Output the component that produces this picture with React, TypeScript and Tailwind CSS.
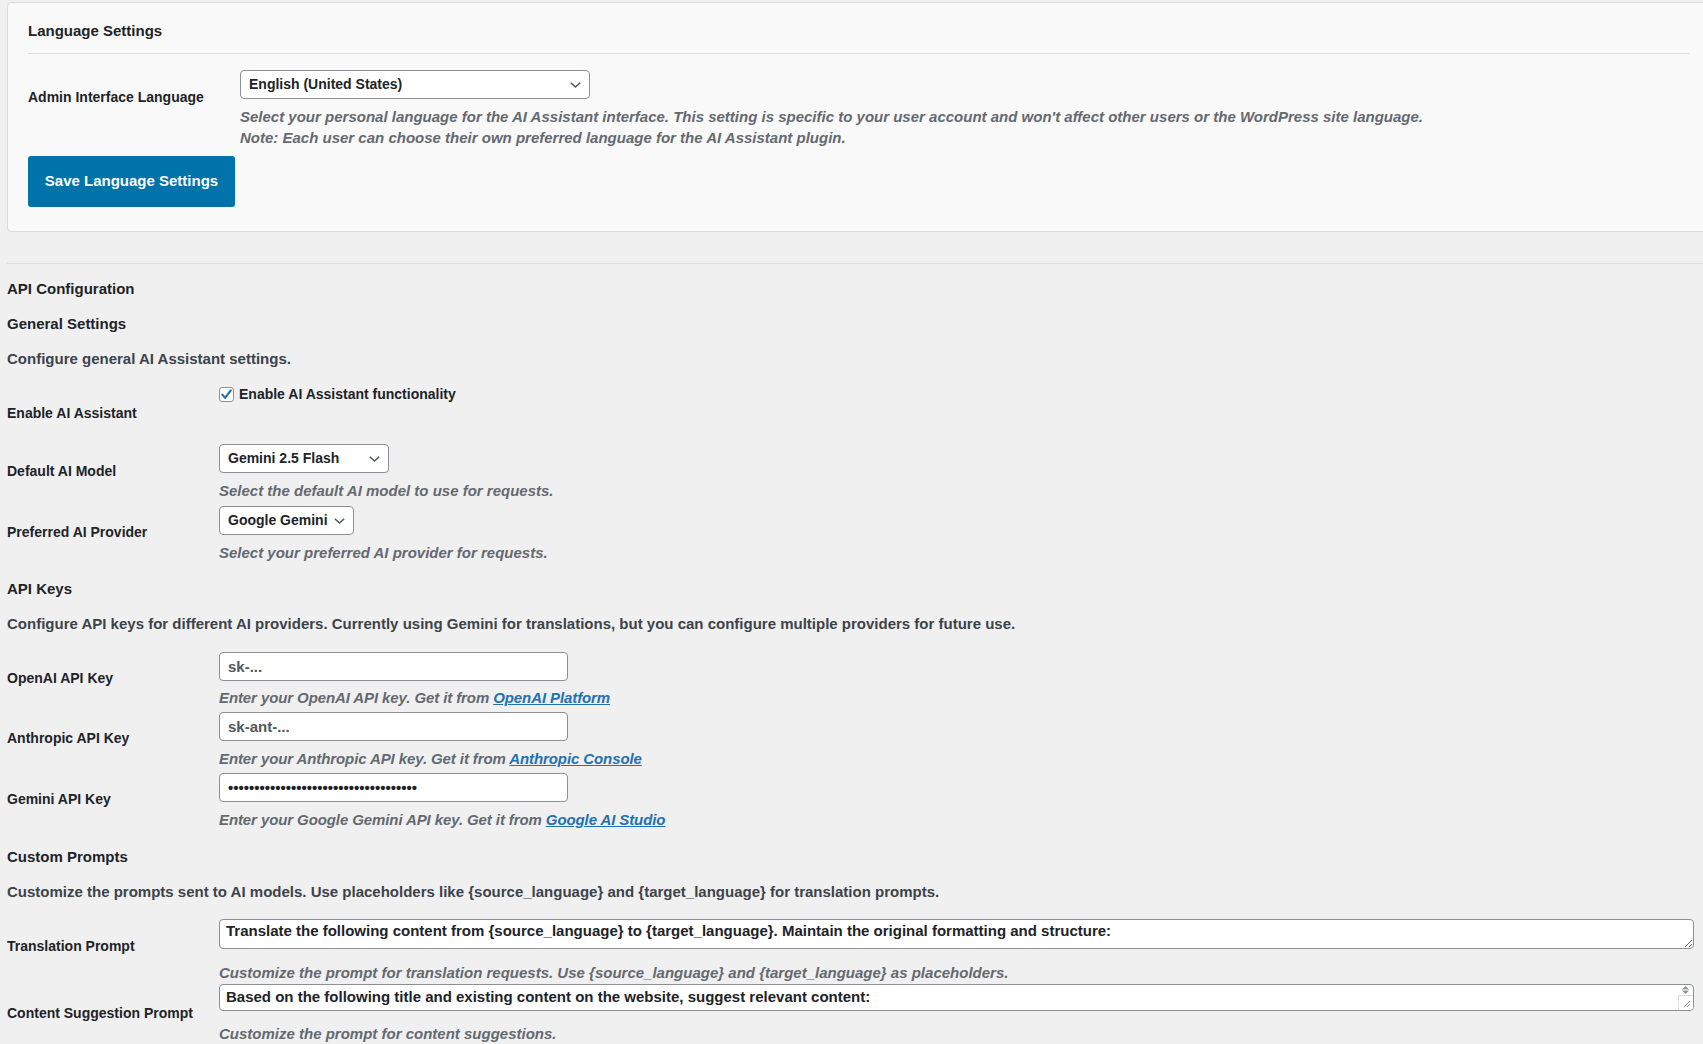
import React from "react";

const Chevron = () => (
  <svg width="11" height="6" viewBox="0 0 11 6" fill="none" className="shrink-0">
    <path d="M0.8 0.8L5.5 5L10.2 0.8" stroke="#50575e" strokeWidth="1.5" />
  </svg>
);

const SelectBox = ({ value, className = "" }: { value: string; className?: string }) => (
  <div
    className={`flex h-[29px] items-center justify-between gap-[6px] rounded-[4px] border border-[#8c8f94] bg-white pl-[8px] pr-[8px] text-[14px] font-bold text-[#1d2327] ${className}`}
  >
    <span>{value}</span>
    <Chevron />
  </div>
);

const Desc = ({ children, className = "" }: { children: React.ReactNode; className?: string }) => (
  <p className={`text-[15px] font-bold italic leading-[20px] text-[#646970] ${className}`}>{children}</p>
);

const Heading = ({ children, className = "" }: { children: React.ReactNode; className?: string }) => (
  <h3 className={`text-[15px] font-bold leading-[20px] text-[#1d2327] ${className}`}>{children}</h3>
);

const Row = ({
  label,
  labelClass,
  className = "",
  children,
}: {
  label: string;
  labelClass: string;
  className?: string;
  children: React.ReactNode;
}) => (
  <div className={`flex ${className}`}>
    <div className={`w-[212px] shrink-0 text-[14px] font-bold leading-[20px] text-[#1d2327] ${labelClass}`}>{label}</div>
    <div className="min-w-0 flex-1">{children}</div>
  </div>
);

const TextInput = ({ value, placeholder }: { value?: string; placeholder?: string }) => (
  <input
    readOnly
    value={value ?? ""}
    placeholder={placeholder}
    className="block h-[29px] w-[349px] rounded-[4px] border border-[#8c8f94] bg-white px-[8px] text-[15px] font-bold text-[#1d2327] outline-none placeholder:text-[#50575e]"
  />
);

const Link = ({ children }: { children: React.ReactNode }) => (
  <a href="#" className="text-[#2271b1] underline">
    {children}
  </a>
);

export default function App() {
  return (
    <div className="min-h-screen w-full overflow-hidden bg-[#f0f0f1] font-['Liberation_Sans',Arial,sans-serif] text-[#1d2327]">
      <div className="w-[1730px] pl-[7px] pt-[2px]">
        {/* Language settings card */}
        <div className="rounded-[4px] border border-[#dcdcde] bg-[#f9f9f9] pb-[24px] pl-[20px] pr-[40px] pt-[18px]">
          <Heading>Language Settings</Heading>
          <div className="mt-[12px] h-px bg-[#dcdcde]" />

          <Row label="Admin Interface Language" labelClass="pt-[17px]" className="mt-[16px]">
            <SelectBox value="English (United States)" className="w-[350px]" />
            <div className="mt-[7px] text-[15px] font-bold italic leading-[21px] text-[#646970]">
              <p>
                Select your personal language for the AI Assistant interface. This setting is specific to your user
                account and won't affect other users or the WordPress site language.
              </p>
              <p>Note: Each user can choose their own preferred language for the AI Assistant plugin.</p>
            </div>
          </Row>

          <button className="mt-[8px] h-[51px] w-[207px] rounded-[3px] bg-[#0073aa] pb-px text-[15px] font-bold text-white">
            Save Language Settings
          </button>
        </div>

        <div className="mt-[31px] h-px bg-[#dcdcde]" />

        {/* API configuration */}
        <Heading className="mt-[15px]">API Configuration</Heading>
        <Heading className="mt-[15px]">General Settings</Heading>
        <p className="mt-[15px] text-[15px] font-bold leading-[20px] text-[#3c434a]">
          Configure general AI Assistant settings.
        </p>

        <Row label="Enable AI Assistant" labelClass="pt-[19px]" className="mt-[15px] h-[60px]">
          <label className="flex items-center gap-[5px] text-[14px] font-bold leading-[20px] text-[#1d2327]">
            <span className="flex h-[15px] w-[15px] items-center justify-center rounded-[3px] border border-[#8c8f94] bg-white">
              <svg width="13" height="13" viewBox="0 0 13 13" fill="none">
                <path d="M2.3 6.6L5.1 9.8L10.8 2.4" stroke="#2271b1" strokeWidth="2.2" strokeLinecap="round" strokeLinejoin="round" />
              </svg>
            </span>
            Enable AI Assistant functionality
          </label>
        </Row>

        <Row label="Default AI Model" labelClass="pt-[17px]">
          <SelectBox value="Gemini 2.5 Flash" className="w-[170px]" />
          <Desc className="mt-[8px]">Select the default AI model to use for requests.</Desc>
        </Row>

        <Row label="Preferred AI Provider" labelClass="pt-[16px]" className="mt-[5px]">
          <SelectBox value="Google Gemini" className="w-fit" />
          <Desc className="mt-[8px]">Select your preferred AI provider for requests.</Desc>
        </Row>

        <Heading className="mt-[16px]">API Keys</Heading>
        <p className="mt-[15px] text-[15px] font-bold leading-[20px] text-[#3c434a]">
          Configure API keys for different AI providers. Currently using Gemini for translations, but you can configure
          multiple providers for future use.
        </p>

        <Row label="OpenAI API Key" labelClass="pt-[16px]" className="mt-[18px]">
          <TextInput placeholder="sk-..." />
          <Desc className="mt-[7px] tracking-[-0.1px]">
            Enter your OpenAI API key. Get it from <Link>OpenAI Platform</Link>
          </Desc>
        </Row>

        <Row label="Anthropic API Key" labelClass="pt-[16px]" className="mt-[4px]">
          <TextInput placeholder="sk-ant-..." />
          <Desc className="mt-[8px] tracking-[-0.1px]">
            Enter your Anthropic API key. Get it from <Link>Anthropic Console</Link>
          </Desc>
        </Row>

        <Row label="Gemini API Key" labelClass="pt-[16px]" className="mt-[4px]">
          <TextInput value={"•".repeat(36)} />
          <Desc className="mt-[8px] tracking-[-0.1px]">
            Enter your Google Gemini API key. Get it from <Link>Google AI Studio</Link>
          </Desc>
        </Row>

        <Heading className="mt-[17px]">Custom Prompts</Heading>
        <p className="mt-[15px] text-[15px] font-bold leading-[20px] text-[#3c434a]">
          Customize the prompts sent to AI models. Use placeholders like {"{source_language}"} and {"{target_language}"} for
          translation prompts.
        </p>

        <Row label="Translation Prompt" labelClass="pt-[17px]" className="mt-[17px]">
          <textarea
            readOnly
            rows={1}
            defaultValue="Translate the following content from {source_language} to {target_language}. Maintain the original formatting and structure:"
            className="block h-[30px] w-[1475px] rounded-[4px] border border-[#8c8f94] bg-white px-[6px] pt-[1px] text-[15px] font-bold leading-[20px] text-[#1d2327] outline-none"
          />
          <Desc className="mt-[14px]">
            Customize the prompt for translation requests. Use {"{source_language}"} and {"{target_language}"} as
            placeholders.
          </Desc>
        </Row>

        <Row label="Content Suggestion Prompt" labelClass="pt-[19px]" className="mt-px">
          <div className="relative w-[1475px]">
            <textarea
              readOnly
              rows={1}
              defaultValue="Based on the following title and existing content on the website, suggest relevant content:"
              className="block h-[27px] w-full resize-none rounded-[4px] border border-[#8c8f94] bg-white pl-[6px] pr-[20px] pt-[2px] text-[15px] font-bold leading-[20px] text-[#1d2327] outline-none"
            />
            {/* scrollbar + resize grip */}
            <div className="absolute bottom-px right-px top-px flex w-[15px] flex-col">
              <svg width="15" height="10" viewBox="0 0 15 10" className="shrink-0">
                <path d="M4.5 4L7.5 1L10.5 4Z" fill="#8c8f94" />
                <rect x="4" y="4.6" width="7" height="0.8" fill="#8c8f94" />
                <path d="M4.5 6L7.5 9L10.5 6Z" fill="#8c8f94" />
              </svg>
              <div className="flex flex-1 items-end justify-end rounded-br-[3px] border-l border-t border-[#dcdcde] bg-white">
                <svg width="8" height="8" viewBox="0 0 8 8" className="mb-[2px] mr-[2px]">
                  <path d="M1 7L7 1M4 7L7 4" stroke="#8c8f94" strokeWidth="0.9" />
                </svg>
              </div>
            </div>
          </div>
          <Desc className="mt-[13px]">Customize the prompt for content suggestions.</Desc>
        </Row>
      </div>
    </div>
  );
}
